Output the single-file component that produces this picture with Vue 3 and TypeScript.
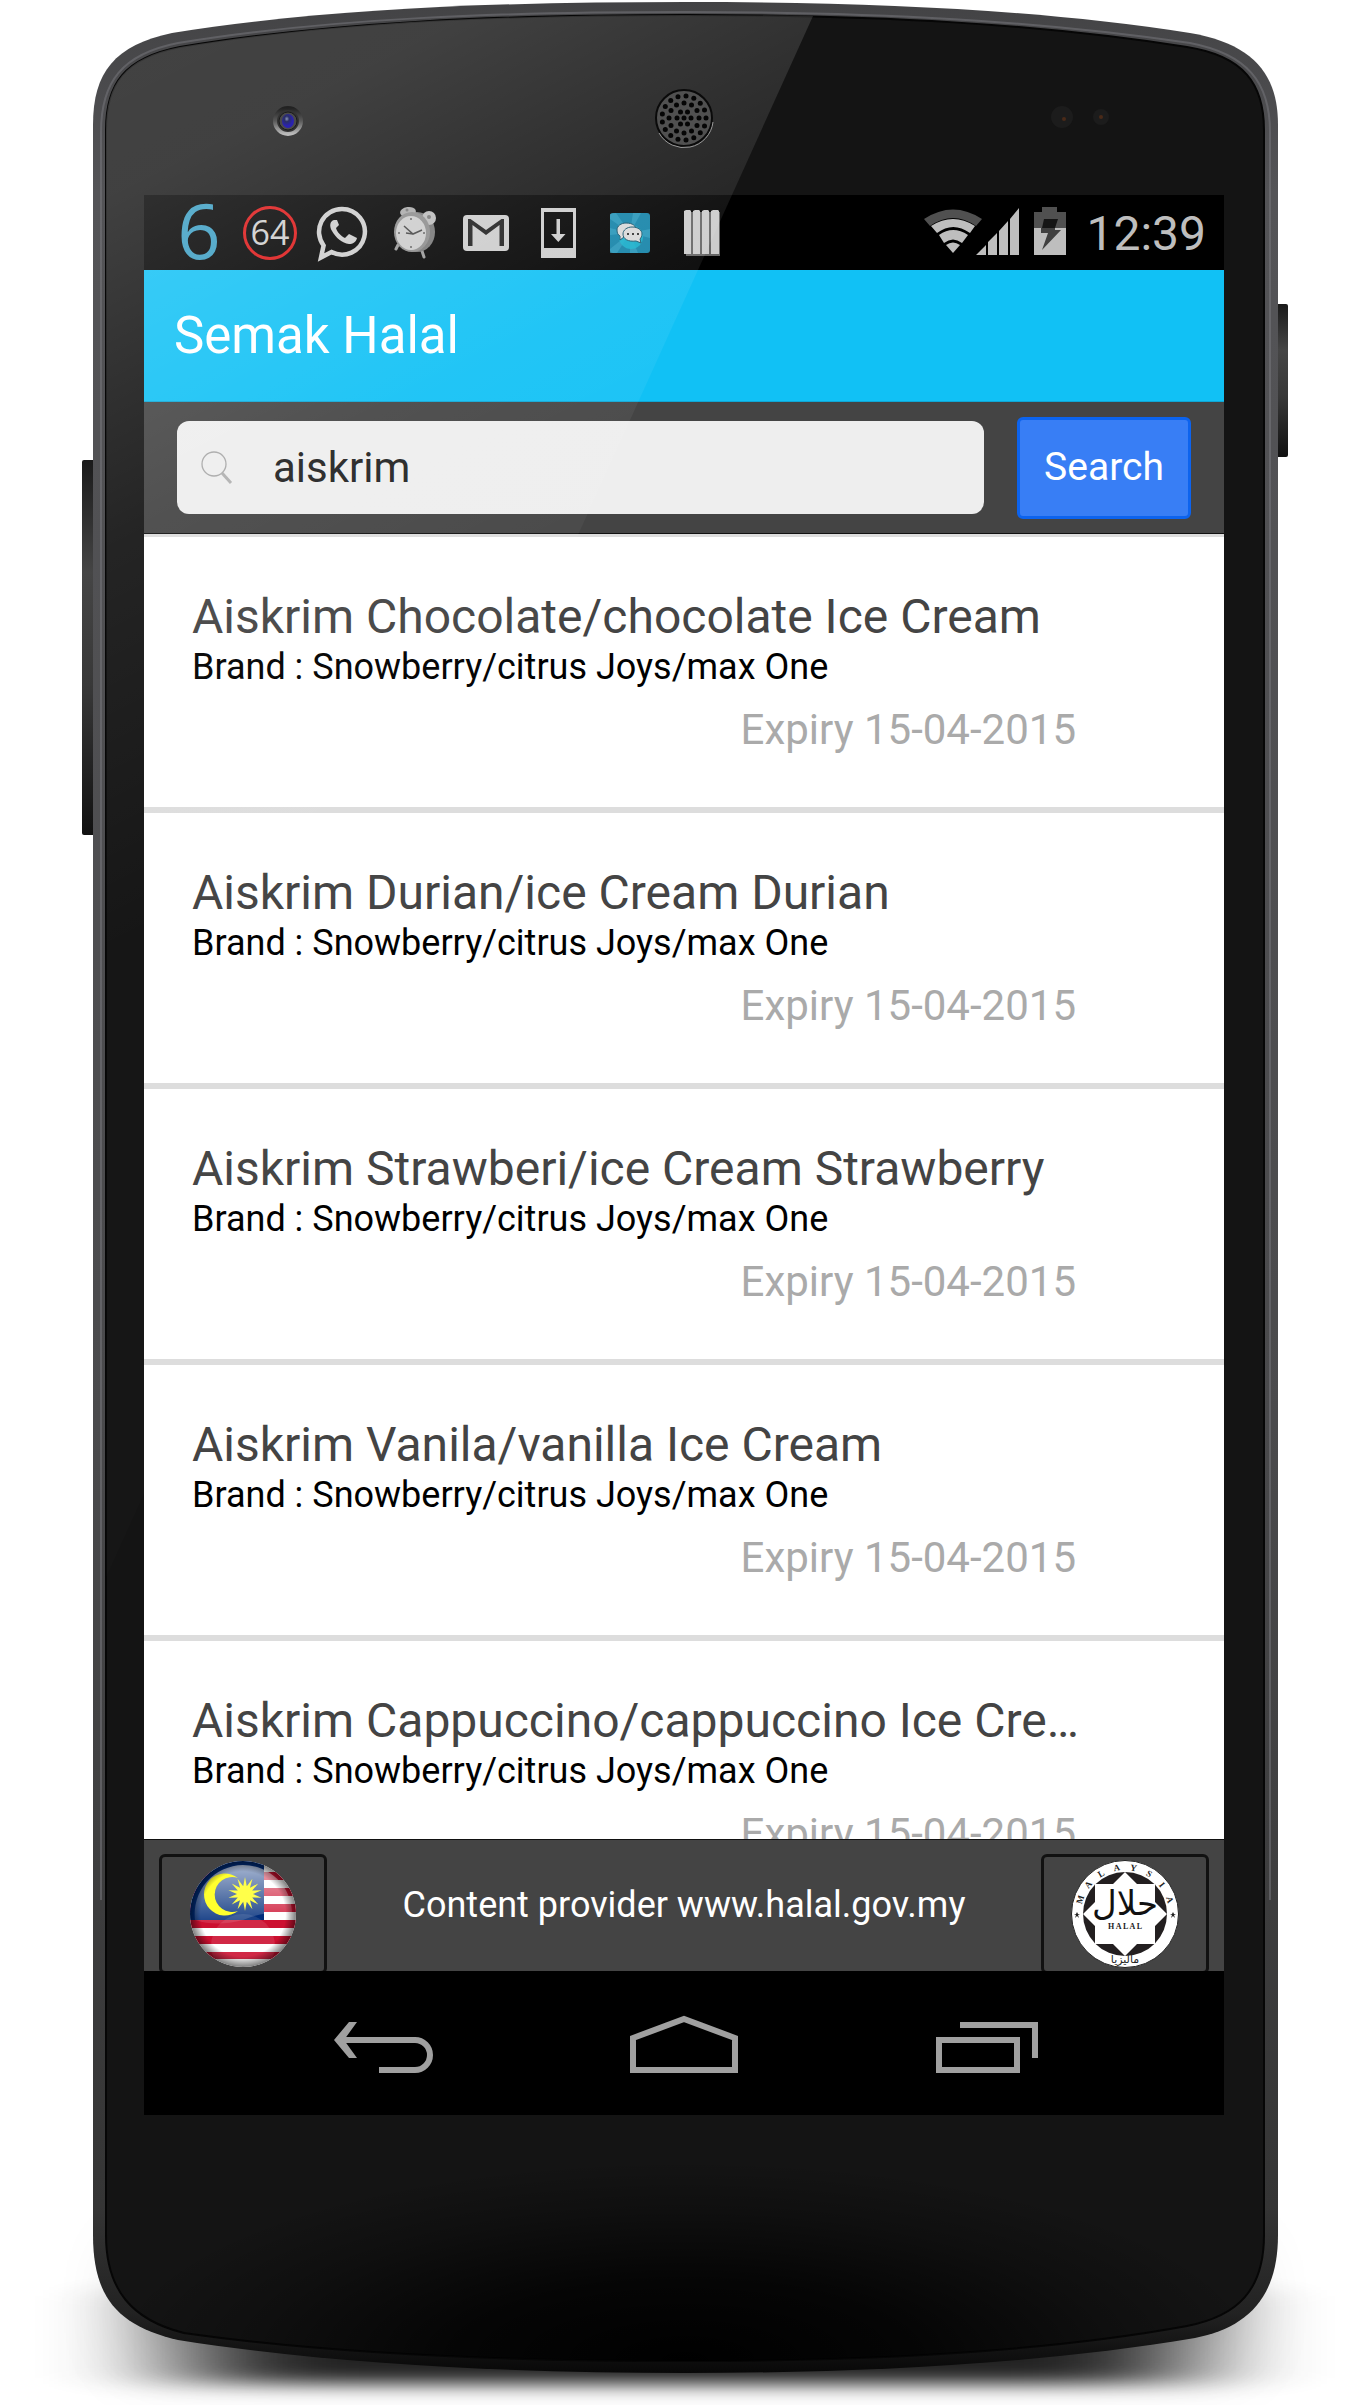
<script setup lang="ts">
import { ref } from 'vue'

interface Product {
  name: string
  brand: string
  expiry: string
}

const query = ref('aiskrim')
const brand = 'Snowberry/citrus Joys/max One'
const products: Product[] = [
  { name: 'Aiskrim Chocolate/chocolate Ice Cream', brand, expiry: '15-04-2015' },
  { name: 'Aiskrim Durian/ice Cream Durian', brand, expiry: '15-04-2015' },
  { name: 'Aiskrim Strawberi/ice Cream Strawberry', brand, expiry: '15-04-2015' },
  { name: 'Aiskrim Vanila/vanilla Ice Cream', brand, expiry: '15-04-2015' },
  { name: 'Aiskrim Cappuccino/cappuccino Ice Cream', brand, expiry: '15-04-2015' },
]

// Speaker grille: concentric rings of round holes
const holes = [[0, 1], [7, 6], [15, 12], [22, 17]].flatMap(([radius, count]) =>
  Array.from({ length: count }, (_, i) => {
    const a = (i / count) * Math.PI * 2
    return { x: 684 + radius * Math.cos(a), y: 118 + radius * Math.sin(a) }
  }),
)

// Fourteen-pointed star of the Malaysian flag
const starPoints = Array.from({ length: 28 }, (_, i) => {
  const a = (i / 28) * Math.PI * 2 - Math.PI / 2
  const r = i % 2 ? 8 : 17
  return `${(55 + r * Math.cos(a)).toFixed(1)},${(33 + r * Math.sin(a)).toFixed(1)}`
}).join(' ')

const sealLetters = 'MALAYSIA'.split('').map((char, i) => ({ char, angle: -72 + i * 20.6 }))
</script>

<template>
  <main class="phone">
    <svg class="layer" viewBox="0 0 1370 2405" preserveAspectRatio="none" aria-hidden="true">
      <defs>
        <linearGradient id="rim" x1="0" y1="0" x2="0" y2="1">
          <stop offset="0" stop-color="#434345" />
          <stop offset="0.08" stop-color="#545457" />
          <stop offset="0.6" stop-color="#4a4a4c" />
          <stop offset="0.93" stop-color="#353535" />
          <stop offset="0.975" stop-color="#222" />
          <stop offset="1" stop-color="#080808" />
        </linearGradient>
        <radialGradient id="chin" gradientUnits="userSpaceOnUse" cx="0" cy="0" r="1" gradientTransform="translate(685 2360) scale(580 200)">
          <stop offset="0" stop-color="#000" />
          <stop offset="0.4" stop-color="#000" stop-opacity="0.75" />
          <stop offset="0.75" stop-color="#000" stop-opacity="0.25" />
          <stop offset="1" stop-color="#000" stop-opacity="0" />
        </radialGradient>
        <linearGradient id="key" x1="0" y1="0" x2="0" y2="1">
          <stop offset="0" stop-color="#1a1a1a" />
          <stop offset="0.3" stop-color="#454545" />
          <stop offset="0.6" stop-color="#383838" />
          <stop offset="1" stop-color="#111" />
        </linearGradient>
        <linearGradient id="ring" x1="0" y1="0" x2="0" y2="1">
          <stop offset="0" stop-color="#222" />
          <stop offset="0.5" stop-color="#5a5a5a" />
          <stop offset="1" stop-color="#bbb" />
        </linearGradient>
        <filter id="shade" x="-30%" y="-100%" width="160%" height="300%"><feGaussianBlur stdDeviation="70 9" /></filter>
        <filter id="haze" x="-30%" y="-100%" width="160%" height="300%"><feGaussianBlur stdDeviation="36 40" /></filter>
        <clipPath id="ground"><rect x="0" y="2100" width="1370" height="305" /></clipPath>
      </defs>
      <g clip-path="url(#ground)">
        <rect x="130" y="2260" width="1110" height="90" fill="#000" opacity="0.2" filter="url(#haze)" />
        <rect x="190" y="2290" width="990" height="94" fill="#000" opacity="0.85" filter="url(#shade)" />
      </g>
      <rect x="82" y="460" width="14" height="375" rx="2" fill="url(#key)" />
      <rect x="1274" y="304" width="14" height="153" rx="2" fill="url(#key)" />
      <path fill="url(#rim)" d="M93 125C93 72 115 45 172 33C330 8 500 2 685 2C880 2 1040 10 1190 33C1255 44 1278 76 1278 125V2235C1278 2300 1245 2328 1195 2338C1040 2364 860 2373 685 2373C510 2373 330 2364 178 2340C120 2326 93 2300 93 2235Z" />
      <path fill="none" stroke="#77777c" stroke-width="2" opacity="0.55" d="M101 1900V132C101 82 122 54 178 43C330 18 500 12 685 12C880 12 1040 21 1190 43C1247 54 1270 82 1270 132V1900" />
      <path fill="#141414" stroke="#060606" stroke-width="2" d="M106 130C106 84 124 58 180 47C330 22 500 15 685 15C880 15 1040 24 1187 47C1244 56 1264 84 1264 130V2235C1264 2290 1238 2316 1187 2326C1040 2353 860 2361 685 2361C510 2361 330 2354 184 2333C132 2320 106 2290 106 2235Z" />
      <path fill="url(#chin)" d="M106 2130H1264V2235C1264 2290 1238 2316 1187 2326C1040 2353 860 2361 685 2361C510 2361 330 2354 184 2333C132 2320 106 2290 106 2235Z" />
    </svg>

    <section class="screen">
      <div class="status">
        <div class="tray">
          <svg width="72" height="75" viewBox="0 0 72 75"><text x="36" y="64" text-anchor="middle" font-family="Open Sans" font-size="76" font-weight="500" fill="#3a9dc2">6</text></svg>
          <svg width="72" height="75" viewBox="0 0 72 75">
            <circle cx="35" cy="38" r="25.500" fill="none" stroke="#dd1616" stroke-width="3" />
            <text x="35" y="50" text-anchor="middle" font-family="Open Sans" font-size="34" fill="#ccc">64</text>
          </svg>
          <svg width="72" height="75" viewBox="0 0 72 75" fill="#ccc">
            <path fill="none" stroke="#ccc" stroke-width="4.500" stroke-linejoin="miter" d="M35 14a22.800 22.800 0 1 1-10.500 43L14 62.500l2.600-12A22.800 22.800 0 0 1 35 14z" />
            <path d="M27 25c-4 1-5 6-2 11c4 7 10 12 17 13c4 0 7-2 8-6l-8-4l-4 4c-4-2-8-6-9-10l3-3l-2-5z" />
          </svg>
          <svg width="72" height="75" viewBox="0 0 72 75">
            <path d="M19 50l-2 4M42 53l3 9M38 19l7 4" stroke="#999" stroke-width="3" stroke-linecap="round" />
            <ellipse cx="38" cy="37" rx="18" ry="20" fill="#777" />
            <ellipse cx="29" cy="17" rx="8" ry="5" fill="#aaa" transform="rotate(-8 29 17)" />
            <ellipse cx="50" cy="23" rx="7" ry="7" fill="#bbb" />
            <circle cx="50" cy="22" r="2" fill="#777" />
            <circle cx="28" cy="15" r="1.500" fill="#777" />
            <ellipse cx="33" cy="37" rx="18" ry="20" fill="#8c8c8c" />
            <ellipse cx="32" cy="38" rx="15" ry="17" fill="#ccc" />
            <path d="M25 31l9 8l9-4M34 39l-7-1" fill="none" stroke="#444" stroke-width="1.500" />
            <path d="M32 23v2M32 51v2M19 38h2M44 38h2" stroke="#777" stroke-width="2" />
          </svg>
          <svg width="72" height="75" viewBox="0 0 72 75">
            <rect x="12" y="20" width="46" height="36" rx="4" fill="#ccc" />
            <path fill="#1e1e1e" d="M17 51V24h2.500L35 35L50.500 24H53V51h-4.500V30L35 40L21.500 30V51z" />
          </svg>
          <svg width="72" height="75" viewBox="0 0 72 75">
            <path fill="#ccc" fill-rule="evenodd" d="M18 13h35v50H18zM21 17v36h29V17z" />
            <path fill="#ccc" d="M33.500 24h3.500v15h5.500l-7.200 8l-7.300-8h5.500z" />
          </svg>
          <svg width="72" height="75" viewBox="0 0 72 75">
            <rect x="15" y="18" width="40" height="40" rx="3" fill="#1483a8" />
            <path fill="#35a3c4" opacity="0.6" d="M35 38L15 24v-5l6-1zM35 38L38 18h8zM35 38l20-4v9zM35 38l8 20h-8zM35 38L22 58h-7v-4zM35 38L15 40v-7z" />
            <circle cx="36" cy="42" r="12" fill="#16b5cf" opacity="0.8" />
            <g fill="#d9d9d9" stroke="#17536a" stroke-width="1">
              <path d="M31 28c7 0 10 3 10 7s-4 7-9 7l-3 0l-4 3v-4c-2-1-3-3-3-6c0-4 4-7 9-7z" />
              <path d="M37 32c6 0 10 3 10 7c0 2-1 4-2 5l1 4l-5-2c-8 1-13-2-13-7c0-4 4-7 9-7z" />
            </g>
            <path d="M32 39h2M37 39h2M42 39h2" stroke="#333" stroke-width="2" />
          </svg>
          <svg width="72" height="75" viewBox="0 0 72 75">
            <path fill="#666" d="M19 17h34v44H19z" />
            <path fill="#ccc" d="M17 16l2-1h4l1 1v43h-7zM26 16l2-1h4l1 1v43h-7zM35 16l2-1h4l1 1v43h-7zM44 16l2-1h5l1 1v43h-8z" />
          </svg>
        </div>
        <svg width="98" height="75" viewBox="0 0 98 75" fill="#bebebe">
          <path fill="#505050" d="M0 24Q29 5 58 24L52 31Q29 15 6 31z" />
          <path d="M7 31Q29 17 51 31L46 38Q29 26 13 38zM15 40Q29 30 44 40L38 48Q29 41 20 48zM22 50Q29 45 36 50L29 58z" />
          <path d="M52 60l10-10v10zM64 47l9-9v22H64zM75 36l9-10v34H75zM86 24l9-11v47H86z" />
        </svg>
        <svg class="battery" width="32" height="75" viewBox="0 0 32 75">
          <path fill="#505050" d="M0 17h8v-5h15v5h9v16H0z" />
          <path fill="#bebebe" d="M0 33h32v27H0z" />
          <path fill="#151515" d="M10 24h14l-3 9h-13z" />
          <path fill="#404040" d="M7 33h14v2h6L8 55l6-17H7z" />
        </svg>
        <span class="clock">12:39</span>
      </div>

      <header class="title-bar"><h1>Semak Halal</h1></header>

      <form class="search-bar" @submit.prevent>
        <label class="field">
          <svg width="32" height="34" viewBox="0 0 32 34" fill="none" aria-hidden="true">
            <circle cx="13" cy="13" r="12" stroke="#a8a8a8" stroke-width="1.300" />
            <path d="M21 22l9 10" stroke="#b0b0b0" stroke-width="3" />
          </svg>
          <input v-model="query" type="text" aria-label="Search products" />
        </label>
        <button class="search-button" type="submit">Search</button>
      </form>

      <ul class="results">
        <li v-for="product in products" :key="product.name">
          <h2>{{ product.name }}</h2>
          <p class="brand">Brand : {{ product.brand }}</p>
          <p class="expiry">Expiry {{ product.expiry }}</p>
        </li>
      </ul>

      <footer class="provider">
        <button type="button" aria-label="Malaysia">
          <svg width="106" height="106" viewBox="0 0 106 106" aria-hidden="true">
            <defs>
              <clipPath id="disc"><circle cx="53" cy="53" r="53" /></clipPath>
              <radialGradient id="edge">
                <stop offset="0.8" stop-color="#000" stop-opacity="0" />
                <stop offset="1" stop-color="#000" stop-opacity="0.5" />
              </radialGradient>
              <linearGradient id="gloss" x1="0" y1="0" x2="0" y2="1">
                <stop offset="0" stop-color="#fff" stop-opacity="0.65" />
                <stop offset="1" stop-color="#fff" stop-opacity="0.1" />
              </linearGradient>
            </defs>
            <g clip-path="url(#disc)">
              <rect width="106" height="106" fill="#fff" />
              <path fill="#cc1030" d="M0 11h106v8H0zM0 27h106v8H0zM0 43h106v8H0zM0 59h106v8H0zM0 75h106v8H0zM0 91h106v7H0z" />
              <rect width="74" height="59" fill="#002c7a" />
              <path d="M53 4A49 49 0 0 1 102 53Q80 48 53 59Q26 66 5 59A49 49 0 0 1 53 4z" fill="url(#gloss)" />
              <circle cx="53" cy="85" r="32" fill="#fff" opacity="0.1" />
              <path fill="#ffff2e" d="M48 17A21 21 0 1 0 48 50A17.500 17.500 0 1 1 48 17z" />
              <polygon :points="starPoints" fill="#ffff4a" />
              <circle cx="53" cy="53" r="53" fill="url(#edge)" />
            </g>
          </svg>
        </button>
        <p>Content provider www.halal.gov.my</p>
        <button type="button" aria-label="Halal Malaysia">
          <svg width="108" height="108" viewBox="0 0 108 108" aria-hidden="true">
            <circle cx="54" cy="54" r="53.500" fill="#fff" stroke="#222" />
            <circle cx="54" cy="54" r="42" fill="#231f20" />
            <path fill="#fff" d="M54 12L66 24H84V42L96 54L84 66V84H66L54 96L42 84H24V66L12 54L24 42V24H42z" />
            <g font-family="Liberation Serif" font-weight="700" font-size="9" text-anchor="middle" fill="#222">
              <text v-for="(l, i) in sealLetters" :key="i" x="54" y="10" :transform="`rotate(${l.angle} 54 54)`">{{ l.char }}</text>
              <text x="54" y="69" font-size="8">H A L A L</text>
            </g>
            <text x="54" y="55" text-anchor="middle" font-family="DejaVu Sans" font-size="34" fill="#111">حلال</text>
            <text x="54" y="103" text-anchor="middle" font-family="DejaVu Sans" font-size="11" fill="#222">ماليزيا</text>
            <path fill="#222" d="M6 52l1 2h2l-2 1l1 3l-2-2l-2 2l1-3l-2-1h2zM102 52l1 2h2l-2 1l1 3l-2-2l-2 2l1-3l-2-1h2z" />
          </svg>
        </button>
      </footer>

      <nav class="system-nav" aria-label="System">
        <button type="button" aria-label="Back">
          <svg width="108" height="60" viewBox="0 0 108 60"><path fill="none" stroke="#a0a0a0" stroke-width="6" d="M49 57H85a15 15 0 0 0 0-30H9" /><path fill="#a0a0a0" d="M19 9h8L14 27l13 18h-8L4 27z" /></svg>
        </button>
        <button type="button" aria-label="Home">
          <svg width="108" height="60" viewBox="0 0 108 60"><path fill="none" stroke="#a0a0a0" stroke-width="6" d="M3 57V25L54 6L105 25V57Z" /></svg>
        </button>
        <button type="button" aria-label="Recent apps">
          <svg width="108" height="60" viewBox="0 0 108 60"><path fill="none" stroke="#a0a0a0" stroke-width="6" d="M9 27H87V57H9ZM30 12H105V45" /></svg>
        </button>
      </nav>
    </section>

    <svg class="layer glare" viewBox="0 0 1370 2405" preserveAspectRatio="none" aria-hidden="true">
      <defs>
        <linearGradient id="sheen" gradientUnits="userSpaceOnUse" x1="0" y1="0" x2="400" y2="800">
          <stop offset="0" stop-color="#fff" stop-opacity="0.2" />
          <stop offset="0.25" stop-color="#fff" stop-opacity="0.19" />
          <stop offset="0.45" stop-color="#fff" stop-opacity="0.12" />
          <stop offset="0.6" stop-color="#fff" stop-opacity="0.07" />
          <stop offset="1" stop-color="#fff" stop-opacity="0.01" />
        </linearGradient>
        <radialGradient id="lens" cx="0.4" cy="0.35">
          <stop offset="0" stop-color="#8a94b8" />
          <stop offset="0.4" stop-color="#2a2f66" />
          <stop offset="1" stop-color="#2a22b0" />
        </radialGradient>
      </defs>
      <path fill="url(#sheen)" d="M813 16Q750 15 685 15C500 15 330 22 180 47C124 58 106 84 106 130V1577Z" />
      <circle cx="288" cy="121" r="13" fill="#333" stroke="url(#ring)" stroke-width="4" />
      <circle cx="288" cy="121" r="9" fill="#4a4a4a" stroke="#1c1c1c" />
      <ellipse cx="288" cy="121" rx="6" ry="7" fill="url(#lens)" />
      <circle cx="684" cy="118" r="28" fill="#505050" stroke="#0a0a0a" stroke-width="2" />
      <path d="M659 133A29 29 0 0 0 713 122" fill="none" stroke="#999" stroke-width="1" />
      <circle v-for="(h, i) in holes" :key="i" :cx="h.x" :cy="h.y" r="2.500" fill="#050505" />
      <circle cx="1062" cy="117" r="11" fill="#1c1c1c" />
      <circle cx="1064" cy="119" r="2" fill="#4a2a18" />
      <circle cx="1101" cy="117" r="8" fill="#1c1c1c" />
      <circle cx="1101" cy="117" r="2" fill="#4a2a18" />
    </svg>
  </main>
</template>

<style>
body {
  margin: 0;
  background: #fff;
}
</style>

<style scoped>
.phone {
  position: relative;
  display: flex;
  box-sizing: border-box;
  height: 100vh;
  min-height: 1200px;
  padding: 195px 146px 290px 144px;
  overflow: hidden;
  font-family: Roboto, 'Liberation Sans', sans-serif;
}

.layer {
  position: absolute;
  inset: 0;
  width: 100%;
  height: 100%;
}

.glare {
  pointer-events: none;
}

.screen {
  position: relative;
  display: flex;
  flex: 1;
  flex-direction: column;
  min-width: 0;
  overflow: hidden;
  background: #fff;
}

h1,
h2,
p,
ul {
  margin: 0;
  padding: 0;
  font-weight: 400;
}

button {
  padding: 0;
  font-family: inherit;
  cursor: pointer;
}

svg {
  display: block;
  flex: none;
}

.status {
  display: flex;
  flex: none;
  align-items: center;
  height: 75px;
  padding: 0 18px 0 19px;
  background: #000;
}

.tray {
  display: flex;
  flex: 1;
  min-width: 0;
}

.tray svg {
  overflow: visible;
}

.battery {
  margin: 0 20px 0 12px;
}

.clock {
  padding-top: 2px;
  color: #bebebe;
  font-size: 48px;
  line-height: 73px;
}

.title-bar {
  flex: none;
  padding: 0 30px;
  border-bottom: 1px solid #0fa7d5;
  background: #11c1f5;
}

.title-bar h1 {
  padding-top: 1px;
  color: #fff;
  font-size: 51px;
  line-height: 130px;
}

.search-bar {
  display: flex;
  flex: none;
  gap: 33px;
  align-items: center;
  height: 131px;
  padding: 0 33px;
  border-bottom: 1px solid #111;
  background: #444;
}

.field {
  display: flex;
  flex: 1;
  align-items: center;
  gap: 40px;
  height: 93px;
  min-width: 0;
  padding: 0 24px;
  border-radius: 12px;
  background: #eee;
}

.field input {
  flex: 1;
  min-width: 0;
  padding: 0;
  border: 0;
  outline: 0;
  background: transparent;
  color: #222;
  font-family: inherit;
  font-size: 42px;
  line-height: 60px;
}

.search-button {
  width: 174px;
  height: 102px;
  padding-bottom: 2px;
  border: 3px solid #0c63ee;
  border-radius: 6px;
  background: #387ef5;
  color: #fff;
  font-size: 39px;
}

.results {
  flex: 1 1 0;
  min-height: 0;
  overflow: hidden;
  border-top: 3px solid #ddd;
  list-style: none;
}

.results li {
  padding: 51px 132px 50px 48px;
  border-bottom: 6px solid #ddd;
}

.results h2 {
  overflow: hidden;
  color: #444;
  font-size: 48px;
  line-height: 58px;
  text-overflow: ellipsis;
  white-space: nowrap;
}

.brand {
  color: #000;
  font-size: 36px;
  line-height: 42px;
}

.expiry {
  margin-top: 15px;
  padding-right: 16px;
  color: #aaa;
  font-size: 42px;
  line-height: 54px;
  text-align: right;
}

.provider {
  display: flex;
  flex: none;
  align-items: flex-start;
  justify-content: space-between;
  box-sizing: border-box;
  height: 132px;
  padding: 14px 15px 0;
  overflow: hidden;
  border-top: 1px solid #111;
  background: #444;
}

.provider button {
  display: flex;
  align-items: center;
  justify-content: center;
  width: 168px;
  height: 120px;
  border: 3px solid #111;
  border-radius: 6px;
  background: transparent;
}

.provider p {
  color: #fff;
  font-size: 36px;
  line-height: 102px;
}

.system-nav {
  display: flex;
  flex: none;
  justify-content: center;
  height: 144px;
  background: #000;
}

.system-nav button {
  display: flex;
  flex: 0 1 300px;
  align-items: center;
  justify-content: center;
  border: 0;
  background: transparent;
}
</style>
